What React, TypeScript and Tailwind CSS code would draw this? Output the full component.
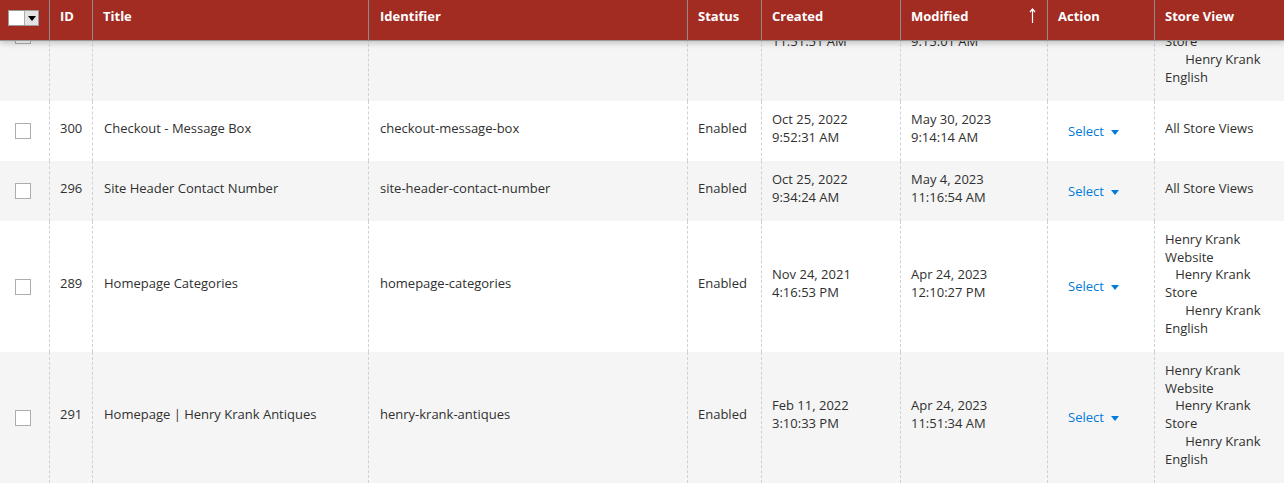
import React from "react";

type Row = {
  id: string;
  title: string;
  identifier: string;
  created: [string, string];
  modified: [string, string];
  stores: string[];
  tall: boolean;
};

const rows: Row[] = [
  {
    id: "301",
    title: "Checkout - Banner",
    identifier: "checkout-banner",
    created: ["Oct 25, 2022", "11:51:51 AM"],
    modified: ["May 30, 2023", "9:15:01 AM"],
    stores: ["Henry Krank Website", "\u00a0\u00a0\u00a0Henry Krank Store", "\u00a0\u00a0\u00a0\u00a0\u00a0\u00a0Henry Krank English"],
    tall: true,
  },
  {
    id: "300",
    title: "Checkout - Message Box",
    identifier: "checkout-message-box",
    created: ["Oct 25, 2022", "9:52:31 AM"],
    modified: ["May 30, 2023", "9:14:14 AM"],
    stores: ["All Store Views"],
    tall: false,
  },
  {
    id: "296",
    title: "Site Header Contact Number",
    identifier: "site-header-contact-number",
    created: ["Oct 25, 2022", "9:34:24 AM"],
    modified: ["May 4, 2023", "11:16:54 AM"],
    stores: ["All Store Views"],
    tall: false,
  },
  {
    id: "289",
    title: "Homepage Categories",
    identifier: "homepage-categories",
    created: ["Nov 24, 2021", "4:16:53 PM"],
    modified: ["Apr 24, 2023", "12:10:27 PM"],
    stores: ["Henry Krank Website", "\u00a0\u00a0\u00a0Henry Krank Store", "\u00a0\u00a0\u00a0\u00a0\u00a0\u00a0Henry Krank English"],
    tall: true,
  },
  {
    id: "291",
    title: "Homepage | Henry Krank Antiques",
    identifier: "henry-krank-antiques",
    created: ["Feb 11, 2022", "3:10:33 PM"],
    modified: ["Apr 24, 2023", "11:51:34 AM"],
    stores: ["Henry Krank Website", "\u00a0\u00a0\u00a0Henry Krank Store", "\u00a0\u00a0\u00a0\u00a0\u00a0\u00a0Henry Krank English"],
    tall: true,
  },
];

const cols = "grid grid-cols-[49px_43px_276px_319px_74px_139px_147px_107px_130px]";
const cell = "flex items-center border-l border-dashed border-[#d1d1d1] pr-[10px] pt-[10px] pb-[15px]";
const th = "border-l border-[#8d8d8d] pt-[8px]";

const App = () => {
  return (
    <div className="w-[1284px] h-[483px] overflow-hidden bg-white font-['Open_Sans',sans-serif] text-[13px] leading-[17.7px] text-[#303030]">
      {/* sticky header */}
      <div className={`${cols} relative z-10 h-[40px] bg-[#a22b22] font-bold text-white shadow-[0_1px_0_#9a9a9a,0_3px_6px_rgba(0,0,0,0.22)]`}>
        <div className="pl-[8px] pt-[10px]">
          <div className="flex h-[16px] w-[31px] border border-[#9c9c9c]">
            <div className="w-[15px] bg-white" />
            <div className="flex flex-1 items-center justify-center border-l border-[#adadad] bg-[#e3e3e3]">
              <svg width="8" height="5" viewBox="0 0 8 5">
                <path d="M0 0h8L4 5z" fill="#000" />
              </svg>
            </div>
          </div>
        </div>
        <div className={`${th} pl-[10px]`}>ID</div>
        <div className={`${th} pl-[10px]`}>Title</div>
        <div className={`${th} pl-[11px]`}>Identifier</div>
        <div className={`${th} pl-[10px]`}>Status</div>
        <div className={`${th} pl-[10px]`}>Created</div>
        <div className={`${th} flex justify-between pl-[10px] pr-[11px]`}>
          <span>Modified</span>
          <svg width="7" height="15" viewBox="0 0 7 15" className="mt-[0px]">
            <path d="M3.5 1v14M1 4l2.5-3L6 4" stroke="#fff" strokeWidth="1.2" fill="none" />
          </svg>
        </div>
        <div className={`${th} pl-[10px]`}>Action</div>
        <div className={`${th} pl-[10px]`}>Store View</div>
      </div>

      {/* rows, scrolled so the first one sits under the header */}
      <div className="-mt-[70px]">
        {rows.map((r, i) => (
          <div
            key={r.id}
            className={`${cols} ${r.tall ? "h-[131px]" : "h-[60px]"} ${i % 2 === 0 ? "bg-[#f5f5f5]" : "bg-white"}`}
          >
            <div className="flex items-center pl-[15px]">
              <div className="h-[16px] w-[16px] border border-[#adadad] bg-white" />
            </div>
            <div className={`${cell} pl-[10px]`}>{r.id}</div>
            <div className={`${cell} pl-[11px]`}>{r.title}</div>
            <div className={`${cell} pl-[11px]`}>{r.identifier}</div>
            <div className={`${cell} pl-[10px]`}>Enabled</div>
            <div className={`${cell} pl-[10px]`}>
              <div>
                <div>{r.created[0]}</div>
                <div>{r.created[1]}</div>
              </div>
            </div>
            <div className={`${cell} pl-[10px]`}>
              <div>
                <div>{r.modified[0]}</div>
                <div>{r.modified[1]}</div>
              </div>
            </div>
            <div className="flex items-center border-l border-dashed border-[#d1d1d1] pl-[20px] pt-[1px]">
              <span className="flex items-center gap-[7px] text-[#007bdb]">
                Select
                <svg width="8" height="5" viewBox="0 0 8 5" className="mt-[1px]">
                  <path d="M0 0h8L4 5z" fill="#007bdb" />
                </svg>
              </span>
            </div>
            <div className={`${cell} pl-[10px]`}>
              <div>
                {r.stores.map((s) => (
                  <div key={s}>{s}</div>
                ))}
              </div>
            </div>
          </div>
        ))}
      </div>
    </div>
  );
};

export default App;
